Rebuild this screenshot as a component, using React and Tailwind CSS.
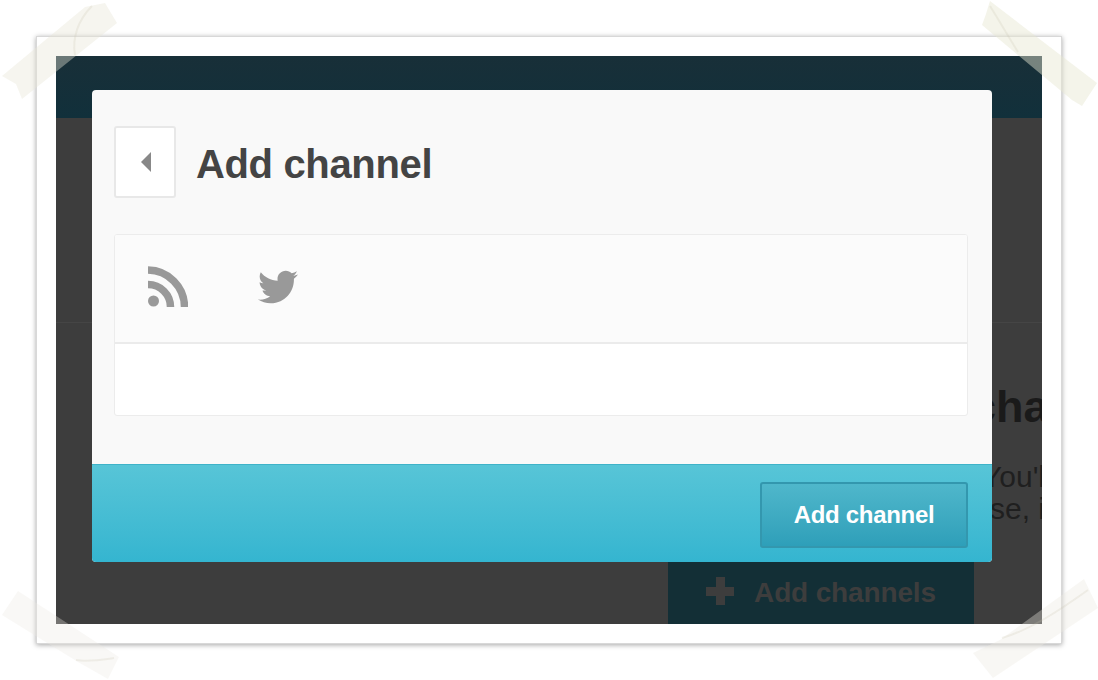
import { FaTwitter } from "react-icons/fa";

const Tape = ({ points, fill, folds }) => (
  <g>
    <polygon points={points} fill={fill} />
    {folds.map((d) => (
      <path key={d} d={d} fill="none" stroke="rgba(200,198,175,0.22)" strokeWidth="2" />
    ))}
  </g>
);

const App = () => {
  return (
    <div className="relative w-[1098px] h-[680px] overflow-hidden bg-white font-['Liberation_Sans',Arial,sans-serif]">
      <div className="pt-9 pl-9">
        <div className="w-[1026px] h-[608px] bg-white p-[19px] border border-[#d8d8d8] shadow-[0_1px_5px_rgba(0,0,0,0.35)]">
          <div className="relative w-[986px] h-[568px] overflow-hidden bg-[#3d3d3d]">
            <div className="h-[62px] bg-gradient-to-b from-[#182f38] to-[#11303b]"></div>
            <div className="h-[205px] border-b border-[#454545]"></div>
            <div className="pt-[62px] whitespace-nowrap">
              <h2 className="ml-[915px] text-[45px] leading-[44px] font-bold text-[#1a1a1a]">cha</h2>
              <p className="ml-[926px] mt-8 text-[30px] leading-8 text-[#1f1f1f]">You'l</p>
              <p className="ml-[934px] text-[30px] leading-8 text-[#1f1f1f]">se, i</p>
            </div>
            <div className="ml-[612px] mt-[27px] w-[306px] h-[72px] bg-[#132f36] flex items-center justify-center gap-5 text-[#3d3d3d]">
              <span className="relative mt-[5px] w-7 h-7">
                <span className="absolute left-[10px] top-0 w-[9px] h-7 bg-[#3d3d3d]"></span>
                <span className="absolute left-0 top-[10px] w-7 h-[9px] bg-[#3d3d3d]"></span>
              </span>
              <span className="mt-[10px] text-[28px] font-bold tracking-[-0.15px]">Add channels</span>
            </div>

            <div className="absolute left-9 top-[34px] w-[900px] h-[472px] rounded-[4px] overflow-hidden bg-[#f9f9f9] flex flex-col">
              <div className="flex-1 px-[22px] pt-9">
                <div className="flex items-center gap-5">
                  <button className="w-[62px] h-[72px] flex items-center justify-center bg-white border-2 border-[#e8e8e8] rounded-[3px]">
                    <span className="ml-[2px] w-0 h-0 border-y-[10px] border-y-transparent border-r-[10px] border-r-[#888]"></span>
                  </button>
                  <h1 className="mt-1 text-[40px] leading-none font-bold text-[#444] tracking-[-0.35px]">Add channel</h1>
                </div>
                <div className="mt-9 w-[854px] h-[182px] bg-white border border-[#ececec] rounded-[3px] overflow-hidden">
                  <div className="h-[109px] bg-[#fbfbfb] border-b-2 border-[#ebebeb] flex items-center pl-[33px] pb-[2px] gap-[70px]">
                    <svg width="40" height="41" viewBox="0 0 40 41" fill="none" className="text-[#999] -mt-[2px]">
                      <path d="M0 4 A37 37 0 0 1 36.5 41" stroke="currentColor" strokeWidth="7.5" />
                      <path d="M0 18.5 A22.5 22.5 0 0 1 22.5 41" stroke="currentColor" strokeWidth="7.5" />
                      <circle cx="5.5" cy="35" r="5.5" fill="currentColor" />
                    </svg>
                    <FaTwitter className="text-[#999] text-[40px] -mt-[2px]" />
                  </div>
                </div>
              </div>
              <div className="h-[98px] pt-[2px] border-t border-[#3fb3c9] bg-gradient-to-b from-[#57c5d7] to-[#34b5d0] flex items-center justify-end pr-6">
                <button className="w-[208px] h-[66px] rounded-[3px] border-2 border-[#3397ae] bg-gradient-to-b from-[#4fb7cb] to-[#2e9fb9] text-white text-[24px] font-bold tracking-[-0.3px]">
                  Add channel
                </button>
              </div>
            </div>
          </div>
        </div>
      </div>

      {/* tape strips on the corners */}
      <svg className="absolute left-0 top-0 pointer-events-none blur-[0.5px]" width="1098" height="680">
        <Tape
          points="2,76 85,7 105,3 117,23 22,99 16,84"
          fill="rgba(232,230,214,0.4)"
          folds={["M92,6 C78,20 72,38 75,55"]}
        />
        <Tape
          points="990,1 1097,83 1082,106 1072,100 982,25 986,14"
          fill="rgba(232,230,210,0.46)"
          folds={["M990,6 C1000,22 1008,36 1018,52"]}
        />
        <Tape
          points="18,591 119,657 108,679 78,662 2,615"
          fill="rgba(236,234,226,0.32)"
          folds={["M76,660 C88,662 100,660 114,658"]}
        />
        <Tape
          points="1084,579 1098,608 993,678 973,653 1000,640"
          fill="rgba(236,234,224,0.36)"
          folds={["M1088,590 C1060,610 1030,630 1002,638"]}
        />
      </svg>
    </div>
  );
};

export default App;
